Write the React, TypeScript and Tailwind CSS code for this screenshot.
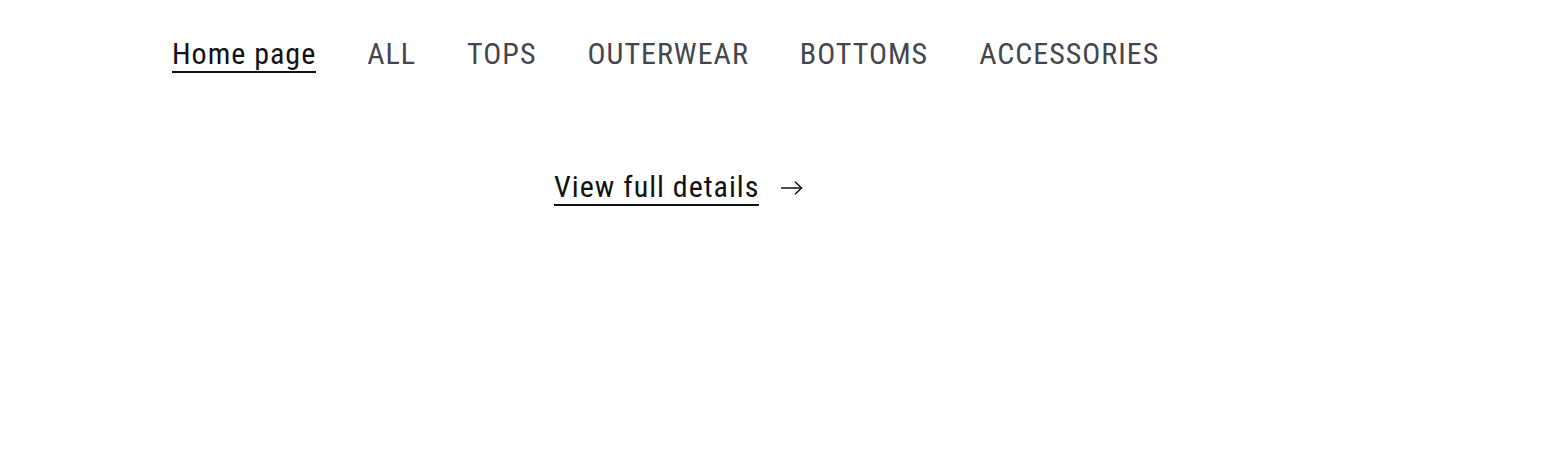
const links = ["ALL", "TOPS", "OUTERWEAR", "BOTTOMS", "ACCESSORIES"];

const ArrowRight = () => (
	<svg width="22" height="14" viewBox="0 0 22 14" fill="none" stroke="currentColor" strokeWidth="1.5">
		<path d="M0 7h20.5" />
		<path d="M14 0.8 20.5 7 14 13.2" />
	</svg>
);

export default function App() {
	return (
		<div className="min-h-[476px] bg-white font-['Roboto_Condensed','Roboto',sans-serif] text-[30px] tracking-[1px] text-[#121212]">
			<nav className="flex gap-[51px] pl-[172px] pt-[37px]">
				<a className="border-b-2 border-[#121212] leading-[34px]">Home page</a>
				{links.map((l) => (
					<a key={l} className="leading-[34px] text-[#45464d]">
						{l}
					</a>
				))}
			</nav>
			<div className="grid grid-cols-[554px_1fr] pt-[97px]">
				<div />
				<div className="flex items-center gap-[22px]">
					<a className="border-b-2 border-[#121212] leading-[34px]">View full details</a>
					<ArrowRight />
				</div>
			</div>
		</div>
	);
}
